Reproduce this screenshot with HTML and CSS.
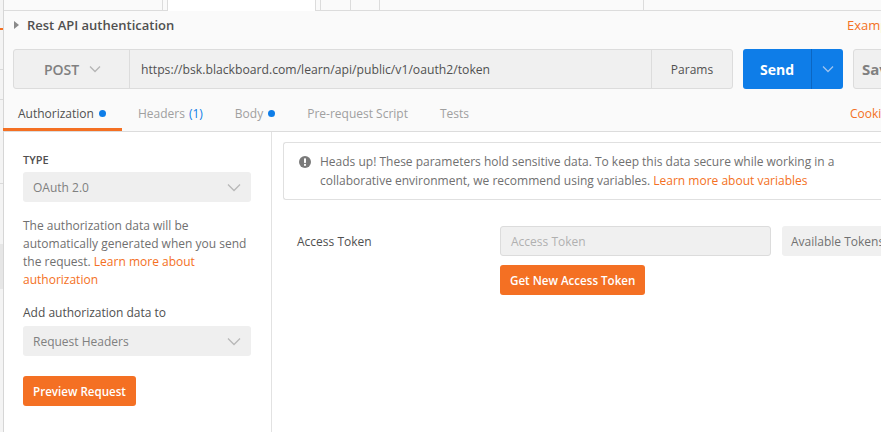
FILE: index.html
```html
<!DOCTYPE html>
<html>
<head>
<meta charset="utf-8">
<link rel="stylesheet" href="styles.css">
</head>
<body>
<div class="app">
  <div class="side">
    <div class="side-a"></div>
    <div class="side-b"></div>
    <div class="side-c"></div>
    <div class="side-d"></div>
    <div class="side-e"></div>
  </div>
  <div class="main">
    <div class="tabstrip">
      <div class="ts ts1"></div>
      <div class="ts ts2 active"></div>
      <div class="ts ts3"></div>
      <div class="ts ts4"></div>
      <div class="ts ts5"></div>
      <div class="ts ts6"></div>
      <div class="ts ts7"></div>
    </div>
    <div class="titlerow">
      <span class="caret"></span>
      <span class="title">Rest API authentication</span>
      <span class="spacer"></span>
      <span class="examples">Examples</span>
    </div>
    <div class="urlrow">
      <div class="urlgroup">
        <div class="method">POST <svg class="chev" width="12" height="8" viewBox="0 0 12 8"><path d="M1 1.5 L6 6.5 L11 1.5" fill="none" stroke="#b5b5b5" stroke-width="1.3"/></svg></div>
        <div class="url">https://bsk.blackboard.com/learn/api/public/v1/oauth2/token</div>
        <div class="params">Params</div>
      </div>
      <div class="send">
        <div class="send-main">Send</div>
        <div class="send-drop"><svg width="12" height="8" viewBox="0 0 12 8"><path d="M1 1.5 L6 6.5 L11 1.5" fill="none" stroke="#9fc3ee" stroke-width="1.3"/></svg></div>
      </div>
      <div class="save">Save</div>
    </div>
    <div class="reqtabs">
      <div class="rt active">Authorization <span class="dot"></span></div>
      <div class="rt">Headers <span class="count">(1)</span></div>
      <div class="rt">Body <span class="dot"></span></div>
      <div class="rt">Pre-request Script</div>
      <div class="rt">Tests</div>
      <span class="spacer"></span>
      <div class="cookies">Cookies</div>
    </div>
    <div class="content">
      <div class="left">
        <div class="label-type">TYPE</div>
        <div class="select">OAuth 2.0 <svg class="chev2" width="14" height="9" viewBox="0 0 14 9"><path d="M1 1.5 L7 7.5 L13 1.5" fill="none" stroke="#b8b8b8" stroke-width="1.3"/></svg></div>
        <p class="desc">The authorization data will be automatically generated when you send the request. <span class="link">Learn more about authorization</span></p>
        <div class="addlabel">Add authorization data to</div>
        <div class="select">Request Headers <svg class="chev2" width="14" height="9" viewBox="0 0 14 9"><path d="M1 1.5 L7 7.5 L13 1.5" fill="none" stroke="#b8b8b8" stroke-width="1.3"/></svg></div>
        <div class="btn preview">Preview Request</div>
      </div>
      <div class="right">
        <div class="notice">
          <svg class="warn" width="12" height="12" viewBox="0 0 12 12"><circle cx="6" cy="6" r="6" fill="#7a7a7a"/><rect x="5" y="2.3" width="2" height="4.6" rx="0.6" fill="#fff"/><circle cx="6" cy="8.9" r="1.05" fill="#fff"/></svg>
          <div class="notice-text">Heads up! These parameters hold sensitive data. To keep this data secure while working in a collaborative environment, we recommend using variables. <span class="link">Learn more about variables</span></div>
        </div>
        <div class="tokenrow">
          <div class="tlabel">Access Token</div>
          <div class="tfields">
            <div class="tinputs">
              <div class="tinput">Access Token</div>
              <div class="avail">Available Tokens</div>
            </div>
            <div class="btn getnew">Get New Access Token</div>
          </div>
        </div>
      </div>
    </div>
  </div>
</div>
</body>
</html>
```
FILE: styles.css
```css
* { box-sizing: border-box; }
html, body { margin: 0; padding: 0; }
body {
  width: 881px;
  height: 432px;
  overflow: hidden;
  font-family: "Open Sans", "DejaVu Sans", sans-serif;
  background: #fafafa;
  color: #505050;
}
.app { display: flex; width: 881px; height: 432px; overflow: hidden; }

.side {
  width: 4px;
  flex: none;
  background: #f4f4f4;
  border-right: 1px solid #d6d6d6;
  display: flex;
  flex-direction: column;
}
.side-a { height: 30px; border-bottom: 2px solid #f47023; }
.side-b { height: 40px; border-bottom: 1px solid #dadada; }
.side-c { height: 30px; border-bottom: 1px solid #dadada; }
.side-d { height: 84px; border-bottom: 1px solid #dadada; }
.side-e { height: 45px; margin-top: 60px; background: #e6e6e6; }

.main { flex: 1; min-width: 0; display: flex; flex-direction: column; background: #fafafa; }

.tabstrip {
  height: 11px;
  flex: none;
  display: flex;
  border-bottom: 1px solid #dcdcdc;
  background: #fafafa;
}
.ts { height: 100%; border-right: 1px solid #dcdcdc; background: #fafafa; }
.ts1 { width: 159px; }
.ts2 { width: 149px; margin-left: 4px; border-left: 1px solid #dcdcdc; }
.ts.active { background: #fff; height: 11px; margin-bottom: -1px; }
.ts3 { width: 5px; }
.ts4 { width: 30px; }
.ts5 { width: 29px; }
.ts6 { width: 264px; }
.ts7 { flex: 1; border-right: none; }

.titlerow {
  height: 27px;
  flex: none;
  display: flex;
  align-items: center;
  padding-left: 10px;
}
.caret {
  width: 0; height: 0;
  border-left: 5px solid #8a8a8a;
  border-top: 4px solid transparent;
  border-bottom: 4px solid transparent;
  margin-right: 8px;
}
.title { font-size: 13px; font-weight: 600; color: #505050; }
.spacer { flex: 1; }
.examples { font-size: 13px; color: #f47023; width: 34px; overflow: hidden; white-space: nowrap; flex: none; }

.urlrow {
  display: flex;
  flex: none;
  height: 40px;
  margin-top: 11px;
  padding-left: 9px;
  gap: 10px;
}
.urlgroup {
  width: 720px;
  flex: none;
  display: flex;
  background: #f0f0f0;
  border: 1px solid #dcdcdc;
  border-radius: 3px;
}
.method {
  width: 116px;
  flex: none;
  border-right: 1px solid #dcdcdc;
  display: flex;
  align-items: center;
  justify-content: center;
  gap: 10px;
  font-size: 14px;
  font-weight: 600;
  color: #808080;
  padding-left: 2px;
}
.url {
  flex: 1;
  display: flex;
  align-items: center;
  padding-left: 11px;
  font-size: 12.2px;
  color: #505050;
  border-right: 1px solid #dcdcdc;
}
.params {
  width: 80px;
  flex: none;
  display: flex;
  align-items: center;
  justify-content: center;
  font-size: 12px;
  color: #505050;
}
.send {
  width: 100px;
  flex: none;
  display: flex;
  background: #0e7de8;
  border-radius: 3px;
  overflow: hidden;
}
.send-main {
  width: 69px;
  display: flex;
  align-items: center;
  justify-content: center;
  color: #fff;
  font-size: 14px;
  font-weight: 700;
  border-right: 1px solid #0b66c2;
}
.send-drop { flex: 1; display: flex; align-items: center; justify-content: center; }
.save {
  width: 60px;
  flex: none;
  background: #f0f0f0;
  border: 1px solid #dcdcdc;
  border-radius: 3px;
  display: flex;
  align-items: center;
  padding-left: 8px;
  font-size: 15px;
  font-weight: 700;
  color: #808080;
}

.reqtabs {
  height: 33px;
  flex: none;
  margin-top: 10px;
  display: flex;
  align-items: stretch;
  border-bottom: 1px solid #dcdcdc;
}
.rt {
  display: flex;
  align-items: center;
  padding: 0 16px 3px 16px;
  font-size: 12px;
  color: #a0a0a0;
  white-space: nowrap;
}
.rt.active { color: #505050; border-bottom: 3px solid #f47023; padding: 0 16px 0 15px; margin-left: -1px; }
.dot { width: 7px; height: 7px; border-radius: 50%; background: #0e7de8; margin-left: 5px; display: inline-block; }
.count { color: #0e7de8; margin-left: 4px; }
.cookies { display: flex; align-items: center; padding-bottom: 3px; font-size: 12px; color: #f47023; width: 31px; overflow: hidden; white-space: nowrap; }

.content { flex: 1; display: flex; background: #fff; }
.left {
  width: 268px;
  flex: none;
  border-right: 1px solid #e2e2e2;
  padding: 20px 20px 0 19px;
}
.label-type { font-size: 11px; font-weight: 600; color: #505050; line-height: 15px; }
.select {
  margin-top: 5px;
  height: 30px;
  background: #efefef;
  border-radius: 3px;
  display: flex;
  align-items: center;
  justify-content: space-between;
  padding: 0 10px 0 10px;
  font-size: 12px;
  color: #808080;
}
.desc {
  margin: 15px 0 0 0;
  font-size: 12px;
  line-height: 18px;
  color: #707070;
}
.link { color: #f47023; }
.addlabel { margin-top: 15px; font-size: 12px; color: #505050; line-height: 18px; }
.addlabel + .select { margin-top: 4px; }
.btn {
  background: #f47023;
  color: #fff;
  font-size: 11.6px;
  font-weight: 600;
  border-radius: 3px;
  height: 30px;
  display: inline-flex;
  align-items: center;
  padding: 0 10px;
}
.preview { margin-top: 20px; }

.right { flex: 1; min-width: 0; padding: 10px 0 0 11px; }
.notice {
  border: 1px solid #e0e0e0;
  border-right: none;
  border-radius: 3px 0 0 3px;
  height: 58px;
  display: flex;
  align-items: flex-start;
  padding: 9px 0 0 15px;
}
.warn { flex: none; margin-top: 4px; margin-right: 9px; }
.notice-text { font-size: 12px; line-height: 19px; color: #707070; width: 530px; }

.tokenrow { display: flex; margin-top: 26px; padding-left: 14px; }
.tlabel { width: 203px; flex: none; font-size: 12px; color: #505050; height: 30px; display: flex; align-items: center; }
.tfields { flex: 1; min-width: 0; }
.tinputs { display: flex; gap: 11px; height: 30px; }
.tinput {
  width: 271px;
  flex: none;
  background: #f0f0f0;
  border: 1px solid #dcdcdc;
  border-radius: 3px;
  display: flex;
  align-items: center;
  padding-left: 10px;
  font-size: 12px;
  color: #b0b0b0;
}
.avail {
  flex: 1;
  background: #f0f0f0;
  border-radius: 3px 0 0 3px;
  display: flex;
  align-items: center;
  padding-left: 9px;
  font-size: 12px;
  color: #707070;
  white-space: nowrap;
  overflow: hidden;
}
.getnew { margin-top: 9px; padding: 0 10px; }
```
